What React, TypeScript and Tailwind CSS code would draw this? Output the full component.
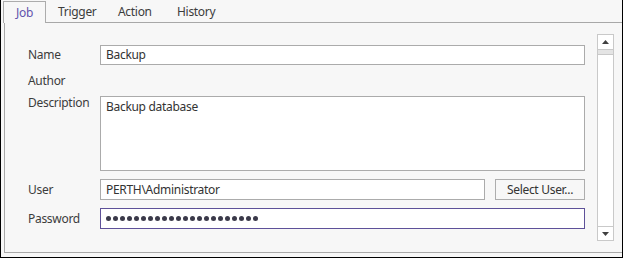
import React from 'react';

const Arrow: React.FC<{ down?: boolean }> = ({ down }) => (
  <svg width="7" height="4" viewBox="0 0 7 4" className="block">
    <path d={down ? 'M0 0 L7 0 L3.5 4 Z' : 'M0 4 L3.5 0 L7 4 Z'} fill="#404040" />
  </svg>
);

const Field: React.FC<{ children?: React.ReactNode; focused?: boolean; className?: string }> = ({
  children,
  focused,
  className = '',
}) => (
  <div
    className={`flex h-[20px] items-center border bg-white pl-[5px] text-[#333] ${
      focused ? 'border-[#5e5199]' : 'border-[#ababab]'
    } ${className}`}
  >
    {children}
  </div>
);

export default function App() {
  const dots = Array.from({ length: 22 });

  return (
    <div className="flex h-[258px] w-[623px] flex-col border-x border-b border-black bg-[#f7f7f7] font-['Segoe_UI','Noto_Sans',sans-serif] text-[12px] leading-[16px] tracking-[-0.3px] text-[#3c3c3c]">
      {/* Tabs */}
      <div className="flex h-[22px] shrink-0">
        <div className="relative z-10 ml-[2px] mt-[1px] flex h-[22px] w-[43px] items-center justify-center border-x border-t border-[#acacac] bg-[#f7f7f7] text-[#6353ad]">
          Job
        </div>
        <div className="flex h-[22px] w-[60px] items-center pl-[12px] pt-[1px]">Trigger</div>
        <div className="flex h-[22px] w-[59px] items-center pl-[12px] pt-[1px]">Action</div>
        <div className="flex h-[22px] items-center pl-[12px] pt-[1px]">History</div>
      </div>

      {/* Panel */}
      <div className="mb-[4px] ml-[3px] flex flex-1 border-b border-l border-t border-[#a8a8a8]">
        <div className="flex w-[580px] flex-col pl-[23px] pt-[22px]">
          <div className="flex h-[20px] items-center">
            <div className="w-[72px]">Name</div>
            <Field className="w-[485px]">Backup</Field>
          </div>

          <div className="mt-[6px] flex h-[20px] items-center">
            <div className="w-[72px]">Author</div>
          </div>

          <div className="mt-[5px] flex items-start">
            <div className="-mt-[1px] w-[72px]">Description</div>
            <div className="h-[75px] w-[485px] border border-[#ababab] bg-white pl-[5px] pt-[2px] text-[#333]">
              Backup database
            </div>
          </div>

          <div className="mt-[8px] flex h-[21px] items-center">
            <div className="w-[72px]">User</div>
            <Field className="h-[21px] w-[385px]">PERTH\Administrator</Field>
            <button className="ml-[10px] flex h-[21px] w-[90px] items-center justify-center border border-[#adadad] bg-[#f7f7f7] text-[#333]">
              Select User...
            </button>
          </div>

          <div className="mt-[8px] flex h-[21px] items-center">
            <div className="w-[72px]">Password</div>
            <Field focused className="h-[21px] w-[485px] gap-[2px]">
              {dots.map((_, i) => (
                <span key={i} className="h-[5px] w-[5px] rounded-full bg-[#3b3a4a]" />
              ))}
            </Field>
          </div>
        </div>

        {/* Scrollbar */}
        <div className="ml-[12px] mt-[11px] flex h-[207px] w-[17px] flex-col border border-[#c9c9c9] bg-[#e4e4e4]">
          <div className="flex h-[15px] items-center justify-center border-b border-[#c9c9c9] bg-white">
            <Arrow />
          </div>
          <div className="mt-[4px] flex-1 border-t border-[#c9c9c9] bg-white" />
          <div className="flex h-[14px] items-center justify-center border-t border-[#c9c9c9] bg-white">
            <Arrow down />
          </div>
        </div>
      </div>
    </div>
  );
}
